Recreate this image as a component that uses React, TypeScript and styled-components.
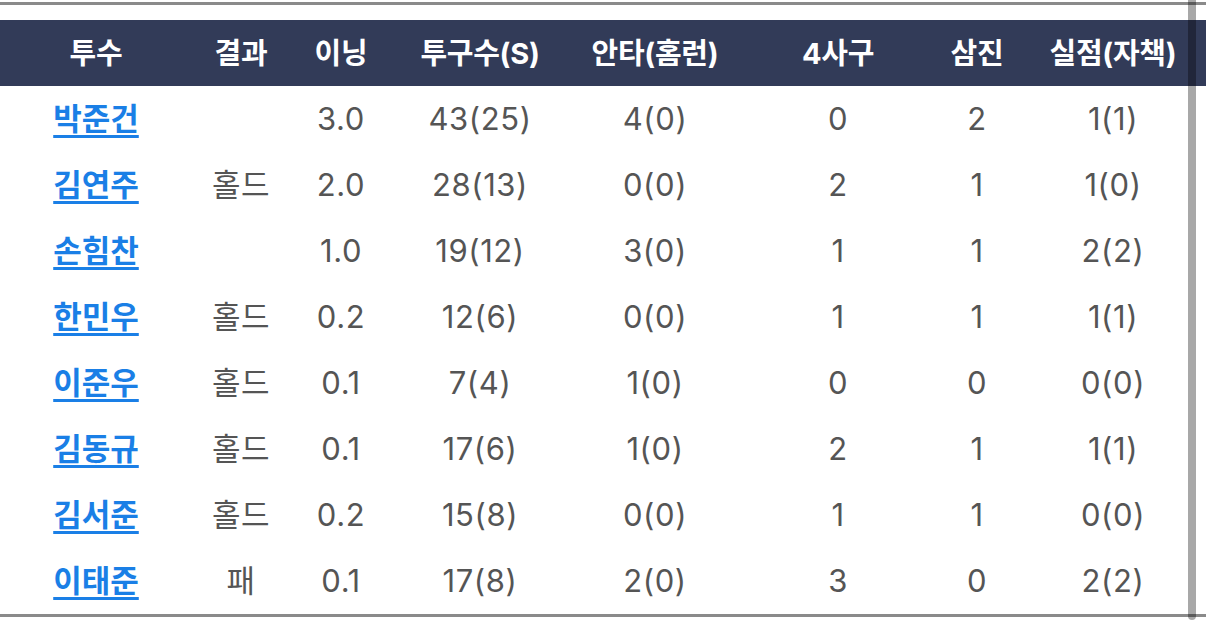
import React from "react";
import styled, { createGlobalStyle } from "styled-components";

const GlobalStyle = createGlobalStyle`
  html, body {
    margin: 0;
    padding: 0;
    background: #fff;
    font-family: Inter, "Noto Sans CJK KR", sans-serif;
  }
`;

type Pitcher = {
  name: string;
  result: string;
  inning: string;
  pitches: string;
  hits: string;
  walks: string;
  so: string;
  runs: string;
};

const pitchers: Pitcher[] = [
  { name: "박준건", result: "", inning: "3.0", pitches: "43(25)", hits: "4(0)", walks: "0", so: "2", runs: "1(1)" },
  { name: "김연주", result: "홀드", inning: "2.0", pitches: "28(13)", hits: "0(0)", walks: "2", so: "1", runs: "1(0)" },
  { name: "손힘찬", result: "", inning: "1.0", pitches: "19(12)", hits: "3(0)", walks: "1", so: "1", runs: "2(2)" },
  { name: "한민우", result: "홀드", inning: "0.2", pitches: "12(6)", hits: "0(0)", walks: "1", so: "1", runs: "1(1)" },
  { name: "이준우", result: "홀드", inning: "0.1", pitches: "7(4)", hits: "1(0)", walks: "0", so: "0", runs: "0(0)" },
  { name: "김동규", result: "홀드", inning: "0.1", pitches: "17(6)", hits: "1(0)", walks: "2", so: "1", runs: "1(1)" },
  { name: "김서준", result: "홀드", inning: "0.2", pitches: "15(8)", hits: "0(0)", walks: "1", so: "1", runs: "0(0)" },
  { name: "이태준", result: "패", inning: "0.1", pitches: "17(8)", hits: "2(0)", walks: "3", so: "0", runs: "2(2)" },
];

const headers = ["투수", "결과", "이닝", "투구수(S)", "안타(홈런)", "4사구", "삼진", "실점(자책)"];

function App() {
  return (
    <>
      <GlobalStyle />
      <Page>
        <TopRule />
        <Board>
          <HeadRow>
            {headers.map((h) => (
              <HeadCell key={h}>{h}</HeadCell>
            ))}
          </HeadRow>
          {pitchers.map((p) => (
            <Row key={p.name}>
              <Cell>
                <NameLink href="#">{p.name}</NameLink>
              </Cell>
              <Cell>{p.result}</Cell>
              <Cell>{p.inning}</Cell>
              <Cell>{p.pitches}</Cell>
              <Cell>{p.hits}</Cell>
              <Cell>{p.walks}</Cell>
              <Cell>{p.so}</Cell>
              <Cell>{p.runs}</Cell>
            </Row>
          ))}
        </Board>
        <BottomRule />
        <ScrollThumb />
      </Page>
    </>
  );
}

export default App;

const Page = styled.div`
  position: relative;
  width: 1206px;
  height: 632px;
  overflow: hidden;
  padding-top: 2px;
  box-sizing: border-box;
`;
const TopRule = styled.div`
  height: 3px;
  background-color: #8a8a8a;
  margin-bottom: 15px;
`;
const Board = styled.div`
  display: flex;
  flex-direction: column;
`;
const columns = "192px 98px 102px 176px 174px 192px 86px 186px";
const HeadRow = styled.div`
  display: grid;
  grid-template-columns: ${columns};
  height: 66px;
  background-color: #323b58;
  align-items: center;
`;
const HeadCell = styled.div`
  text-align: center;
  color: #fff;
  font-weight: 700;
  font-size: 29px;
  letter-spacing: -0.3px;
  line-height: 1;
`;
const Row = styled.div`
  display: grid;
  grid-template-columns: ${columns};
  height: 66px;
  align-items: center;
`;
const Cell = styled.div`
  text-align: center;
  color: #555;
  font-size: 31px;
  font-weight: 400;
  letter-spacing: 0.6px;
  line-height: 1;
  padding-bottom: 2px;
`;
const NameLink = styled.a`
  color: #1a7fe6;
  font-weight: 700;
  font-size: 31px;
  text-decoration: underline;
  text-decoration-thickness: 3px;
  text-underline-offset: 5px;
  letter-spacing: 0;
`;
const BottomRule = styled.div`
  height: 3px;
  background-color: #8a8a8a;
`;
const ScrollThumb = styled.div`
  position: absolute;
  top: 0;
  left: 1188px;
  width: 8px;
  height: 620px;
  background-color: rgba(0, 0, 0, 0.34);
  border-radius: 0 0 4px 4px;
`;
